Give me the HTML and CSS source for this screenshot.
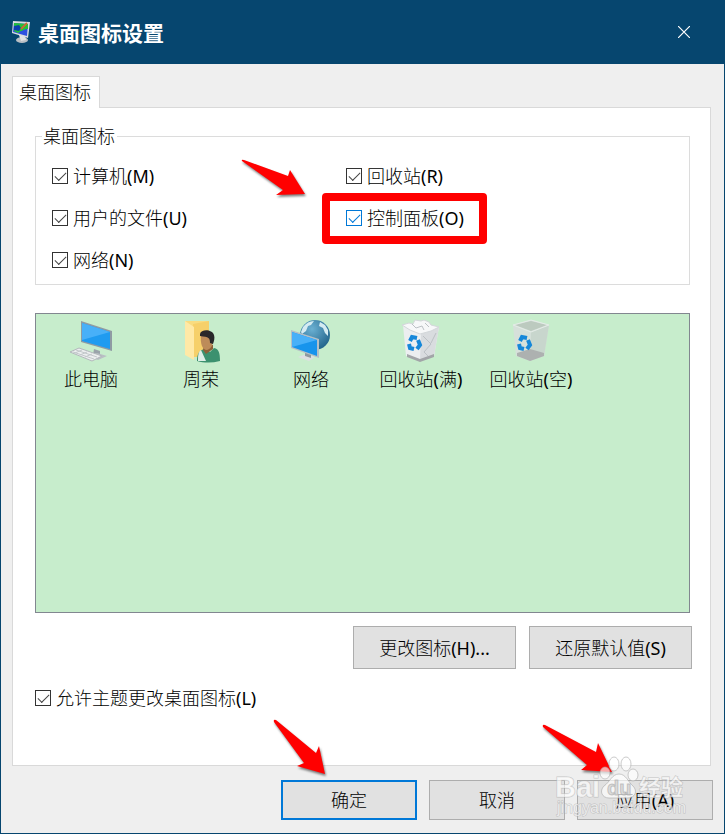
FILE: index.html
```html
<!DOCTYPE html>
<html lang="zh-CN">
<head>
    <meta charset="UTF-8">
    <meta name="viewport" content="width=device-width, initial-scale=1.0">
    <title>桌面图标设置</title>
    <link rel="stylesheet" href="styles.css">
</head>
<body>
    <div class="window">
        <header class="titlebar">
            <svg class="title-icon" viewBox="0 0 22 24" aria-hidden="true">
                <ellipse cx="12" cy="20" rx="6" ry="3" fill="#b9bfc4"/>
                <path d="M9 15l6 0 1 5-5 1z" fill="#dfe2e4"/>
                <path d="M3 1l17 1-2 16L2 13z" fill="#d9dde0"/>
                <path d="M4 3l14 1-1 12L3 12z" fill="#2d50e0"/>
                <path d="M4 3l14 1v5c-4 0-5 2-7 2L8 13 4 11z" fill="#22c03a"/>
                <path d="M4 6l5-1 2 3-2 3-5-1z" fill="#0b3fae"/>
                <path d="M17 3l-6 6" stroke="#c96a35" stroke-width="2"/>
            </svg>
            <h1 class="title">桌面图标设置</h1>
            <button class="close" type="button" aria-label="关闭">
                <svg viewBox="0 0 12 12"><path d="M0 0l12 12M12 0L0 12" stroke="#fff" stroke-width="1.2"/></svg>
            </button>
        </header>

        <main class="content">
            <div class="tabs">
                <button class="tab" type="button">桌面图标</button>
            </div>
            <section class="panel">
                <fieldset class="group">
                    <legend>桌面图标</legend>
                    <div class="options">
                        <div class="option"><label class="check"><input type="checkbox" checked>计算机(M)</label></div>
                        <div class="option"><label class="check"><input type="checkbox" checked>用户的文件(U)</label></div>
                        <div class="option"><label class="check"><input type="checkbox" checked>网络(N)</label></div>
                        <div class="option">
                            <label class="check"><input type="checkbox" checked>回收站(R)</label>
                            <svg class="arrow arrow-option" viewBox="0 0 70 42" aria-hidden="true">
                                <path d="M1 3Q0 1 3 2L47 18 49 12 64 36 35 37 42 32z"/>
                            </svg>
                        </div>
                        <div class="option"><label class="check marked"><input type="checkbox" checked>控制面板(O)</label></div>
                    </div>
                </fieldset>

                <ul class="icons">
                    <li>
                        <svg viewBox="0 0 44 44" aria-hidden="true">
                            <path d="M25 30l6 2v5l-7-1z" fill="#9aa3aa"/>
                            <path d="M19 37l9-3 10 3-9 4z" fill="#b9bfc4"/>
                            <path d="M12 2l31 10v20L12 23z" fill="#8f9ba3"/>
                            <path d="M13 4l28 9v17L13 22z" fill="#1f9bf0"/>
                            <path d="M13 4l28 9-28 8z" fill="#48b0f8"/>
                            <path d="M1 33l9-4 23 8-10 5z" fill="#eceeef" stroke="#b3b8bc"/>
                            <path d="M4 33l21 7M7 31l21 7M6 34l7-3M11 36l7-3M16 38l7-3" stroke="#c3c8cb" fill="none"/>
                        </svg>
                        <span>此电脑</span>
                    </li>
                    <li>
                        <svg viewBox="0 0 44 44" aria-hidden="true">
                            <path d="M6 2h24v32H6z" fill="#f9dc80"/>
                            <path d="M14 5l16-3v36H14z" fill="#f6d06a"/>
                            <path d="M6 2l9 6v33l-9-5z" fill="#ffe9a6"/>
                            <path d="M18 42c0-7 2-11 8-12l5 3 4-4c5 1 6 5 6 13-8 2-16 2-23 0z" fill="#3c916f"/>
                            <path d="M22 31l5 11h-8c0-5 0-9 3-11z" fill="#dfeee7"/>
                            <path d="M25 26h9v4l-7 5-3-4z" fill="#8c6038"/>
                            <path d="M22 15c2-3 11-3 12 2 1 6-1 13-6 14-5 0-7-7-6-16z" fill="#bd8c59"/>
                            <path d="M21 15c1-5 12-5 14 1 1 3 0 6-1 9l-3-1c0-5-1-6-10-7z" fill="#29282a"/>
                        </svg>
                        <span>周荣</span>
                    </li>
                    <li>
                        <svg viewBox="0 0 44 44" aria-hidden="true">
                            <defs>
                                <radialGradient id="globe" cx="0.4" cy="0.3" r="0.7">
                                    <stop offset="0" stop-color="#6bb0d2"/>
                                    <stop offset="1" stop-color="#25678e"/>
                                </radialGradient>
                            </defs>
                            <circle cx="26" cy="16" r="15" fill="url(#globe)"/>
                            <path d="M14 8c3-4 7-6 11-6l-3 4-3 1-2 5-4 3-1-2zM31 3l5 3 3 5v6l-3-3-2-5-4-2z" fill="#d5ebf2"/>
                            <path d="M9 38l8-3 9 3-6 4z" fill="#dde0e2"/>
                            <path d="M16 33l6 2v4l-6-2z" fill="#8e979e"/>
                            <path d="M2 11l28 9v19L2 29z" fill="#b4bfc6"/>
                            <path d="M3 13l25 8v16L3 28z" fill="#1794ec"/>
                            <path d="M3 13l25 8-25 7z" fill="#48b0f8"/>
                        </svg>
                        <span>网络</span>
                    </li>
                    <li>
                        <svg viewBox="0 0 44 44" aria-hidden="true">
                            <path d="M4 6l36 2-5 29-14 5-14-5z" fill="#eceef0"/>
                            <path d="M22 14l18-6-5 29-14 5z" fill="#d9dcdf"/>
                            <path d="M3 6l7-2 4 1 2-4 6 1 3-1 5 2 2 3 8 2-8 4-11 3-10-4z" fill="#f7f8f9" stroke="#d3d7da"/>
                            <path d="M13 5l4 4 6-2 2 4M26 4l4 4M24 17l8 8-7 8 6 6M37 14l-5 10" stroke="#bcc1c5" fill="none"/>
                            <path d="M8 35l13 5 14-5v3l-14 5-13-5z" fill="#a2a5a8"/>
                            <g fill="none" stroke="#1687d9" stroke-width="4"><path d="M11 22l2-4 5 1"/><path d="M19 21l2 5-3 4"/><path d="M15 30l-4-1-1-4"/></g>
                        </svg>
                        <span>回收站(满)</span>
                    </li>
                    <li>
                        <svg viewBox="0 0 44 44" aria-hidden="true">
                            <path d="M4 6l18-5 18 5-5 31-14 5-14-5z" fill="#d6e0da"/>
                            <path d="M6 6l16-4 16 4-16 6z" fill="#bccabf"/>
                            <path d="M22 13l18-7-5 31-14 5z" fill="#c8d6cd"/>
                            <path d="M8 34l13-4 14 4v3l-14 5-13-5z" fill="#adb1b0"/>
                            <path d="M4 6l18-5 18 5-18 7z" fill="none" stroke="#e4ece7"/>
                            <g fill="none" stroke="#1687d9" stroke-width="4"><path d="M11 22l2-4 5 1"/><path d="M19 21l2 5-3 4"/><path d="M15 30l-4-1-1-4"/></g>
                        </svg>
                        <span>回收站(空)</span>
                    </li>
                </ul>

                <div class="icon-actions">
                    <button class="btn btn-wide" type="button">更改图标(H)...</button>
                    <button class="btn btn-wide" type="button">还原默认值(S)</button>
                </div>
                <div class="theme-option">
                    <label class="check"><input type="checkbox" checked>允许主题更改桌面图标(L)</label>
                </div>
            </section>
        </main>

        <footer class="footer">
            <div class="action">
                <button class="btn btn-primary" type="submit">确定</button>
                <svg class="arrow arrow-ok" viewBox="0 0 60 62" aria-hidden="true">
                    <path d="M1 3Q0 0 3 1L43 34 46 27 52 55 24 47 31 44z"/>
                </svg>
            </div>
            <div class="action">
                <button class="btn" type="button">取消</button>
            </div>
            <div class="action">
                <button class="btn" type="button">应用(A)</button>
                <svg class="arrow arrow-apply" viewBox="0 0 76 56" aria-hidden="true">
                    <path d="M1 3Q0 0 3 1L54 28 56 19 70 48 39 46 45 41z"/>
                </svg>
                <svg class="watermark" viewBox="0 0 136 66">
                    <g class="paw">
                        <ellipse cx="52" cy="18" rx="5" ry="6"/>
                        <ellipse cx="61" cy="9" rx="5" ry="7"/>
                        <ellipse cx="73" cy="9" rx="5" ry="7"/>
                        <ellipse cx="80" cy="20" rx="5" ry="6"/>
                        <path d="M66 19c7 0 9 8 14 12 5 5 2 12-5 12H56c-7 0-10-7-5-12 6-4 8-12 15-12z"/>
                    </g>
                    <text class="brand" x="2" y="42">Bai</text>
                    <text class="du" x="54" y="40">du</text>
                    <text class="brand-cn" x="86" y="40">经验</text>
                    <text class="site" x="4" y="58">jingyan.baidu.com</text>
                </svg>
            </div>
        </footer>
    </div>
</body>
</html>
```
FILE: styles.css
```css
* {
    box-sizing: border-box;
}

body {
    margin: 0;
    background: #efefef;
    color: #000;
    font-family: "Noto Sans", "Noto Sans CJK SC Light", "Noto Sans CJK SC", sans-serif;
    font-size: 18px;
    line-height: 24px;
}

button {
    font: inherit;
    color: inherit;
}

.window {
    display: flex;
    flex-direction: column;
    min-height: 100vh;
    border: 1px solid #06466f;
    overflow: hidden;
}

.titlebar {
    display: flex;
    align-items: center;
    height: 63px;
    padding: 0 24px 2px 9px;
    background: #06466f;
    color: #fff;
}

.title-icon {
    width: 22px;
    height: 24px;
}

.title {
    flex: 1;
    margin: 0 0 0 6px;
    font-family: "Noto Sans CJK SC", sans-serif;
    font-size: 21px;
    font-weight: 700;
}

.close {
    display: grid;
    place-items: center;
    width: 32px;
    height: 32px;
    padding: 0;
    border: 0;
    background: none;
}

.close svg {
    width: 12px;
    height: 12px;
}

.content {
    flex: 1;
    display: flex;
    flex-direction: column;
    padding: 12px 13px 0 11px;
}

.tabs {
    display: flex;
}

.tab {
    position: relative;
    z-index: 1;
    height: 32px;
    margin-bottom: -1px;
    padding: 0 8px 2px 6px;
    border: 1px solid #d9d9d9;
    border-bottom: 0;
    background: #fff;
}

.panel {
    flex: 1;
    display: flex;
    flex-direction: column;
    padding: 16px 18px 55px 22px;
    border: 1px solid #d9d9d9;
    background: #fff;
}

.group {
    min-width: 0;
    margin: 0 2px 0 0;
    padding: 0;
    border: 1px solid #dcdcdc;
}

.group legend {
    margin-left: 6px;
    padding: 0 2px 0 1px;
}

.options {
    display: grid;
    grid-template-columns: 6fr 7fr;
    grid-template-rows: repeat(3, 42px);
    grid-auto-flow: column;
    padding: 7px 0 3px 16px;
}

.option {
    position: relative;
    display: flex;
    align-items: center;
}

.check {
    position: relative;
    display: inline-flex;
    align-items: center;
    gap: 5px;
}

.check input {
    appearance: none;
    width: 16px;
    height: 16px;
    margin: 0;
    border: 1px solid #333;
    background: #fff;
}

.check input::before {
    content: "";
    display: block;
    width: 10px;
    height: 5px;
    margin: 3px 0 0 2px;
    border: solid #444;
    border-width: 0 0 1px 1px;
    transform: rotate(-45deg);
}

.marked input,
.marked input::before {
    border-color: #0078d7;
}

/* red frame round the highlighted option */
.marked::after {
    content: "";
    position: absolute;
    inset: -13px -23px -14px -24px;
    border: 8px solid #f00;
    border-radius: 4px;
}

.icons {
    flex: 1;
    display: grid;
    grid-template-columns: repeat(auto-fill, 110px);
    align-content: start;
    min-height: 300px;
    margin: 28px 2px 0 0;
    padding: 5px 0;
    border: 1px solid #828790;
    background: #c7edcc;
    list-style: none;
}

.icons li {
    display: flex;
    flex-direction: column;
    align-items: center;
    gap: 4px;
}

.icons svg {
    width: 44px;
    height: 44px;
}

.icon-actions {
    display: flex;
    justify-content: flex-end;
    gap: 13px;
    margin-top: 13px;
}

.btn {
    width: 136px;
    height: 40px;
    padding: 0;
    border: 1px solid #adadad;
    background: #e1e1e1;
}

.btn-wide {
    width: 163px;
    height: 43px;
}

.btn-primary {
    border: 2px solid #0078d7;
}

.theme-option {
    display: flex;
    margin-top: 17px;
}

.footer {
    display: flex;
    justify-content: flex-end;
    gap: 12px;
    padding: 14px 11px 13px;
}

.action {
    position: relative;
    display: flex;
}

.arrow {
    position: absolute;
    fill: #f00;
    filter: drop-shadow(1px 2px 1px rgba(0, 0, 0, 0.5));
    pointer-events: none;
}

.arrow-option {
    left: -105px;
    top: 3px;
    width: 70px;
    height: 42px;
}

.arrow-ok {
    left: -8px;
    top: -61px;
    width: 60px;
    height: 62px;
}

.arrow-apply {
    left: -35px;
    top: -56px;
    width: 76px;
    height: 56px;
}

.watermark {
    position: absolute;
    right: 24px;
    bottom: -1px;
    width: 136px;
    height: 66px;
    fill: #fff;
    fill-opacity: 0.65;
    stroke: #a8a8a8;
    stroke-opacity: 0.6;
    stroke-width: 1px;
    font-family: "Liberation Sans", "Noto Sans CJK SC", sans-serif;
    font-weight: 700;
    pointer-events: none;
}

.brand,
.brand-cn,
.site {
    paint-order: stroke;
}

.brand {
    font-size: 29px;
}

.du {
    font-size: 20px;
    fill: #ccc;
}

.brand-cn {
    font-size: 22px;
}

.site {
    font-size: 16px;
    font-weight: 400;
}
```
